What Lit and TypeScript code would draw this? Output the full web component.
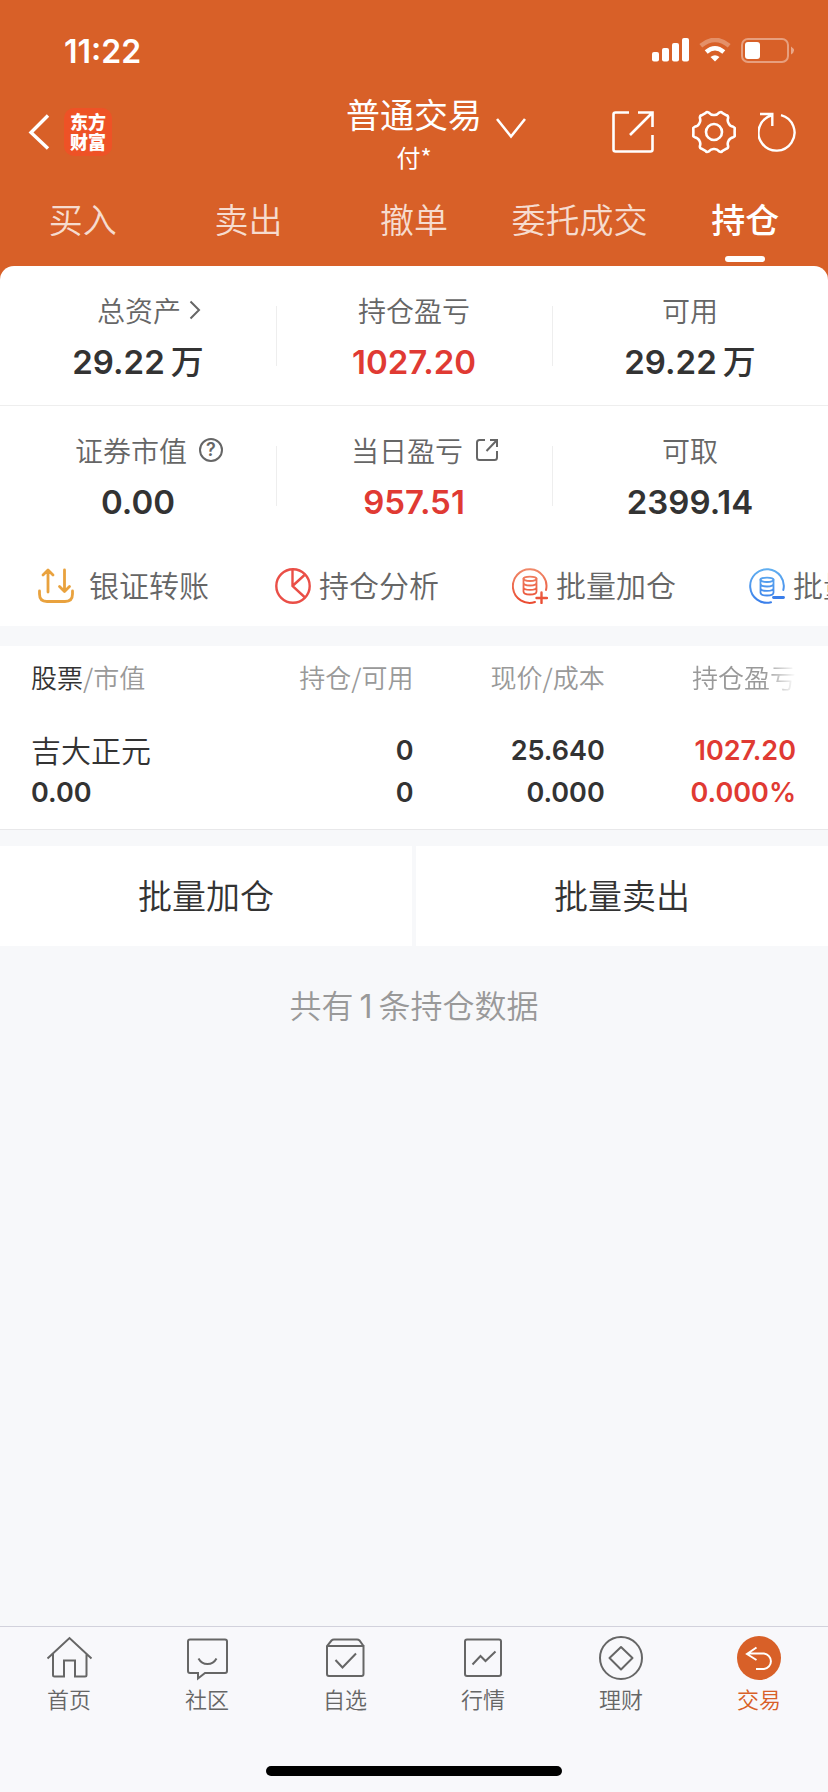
import { LitElement, html, css, svg } from "lit";
import { customElement, property } from "lit/decorators.js";
import { classMap } from "lit/directives/class-map.js";

const polar = (angle: number, r: number) => {
  const a = (angle * Math.PI) / 180;
  return `${(22 + r * Math.cos(a)).toFixed(2)} ${(22 + r * Math.sin(a)).toFixed(2)}`;
};

// Six-lobed cog: a shallow notch every 60 degrees, rounded shoulders between.
const cogPath = () => {
  let d = "";
  for (let k = 0; k < 6; k++) {
    const a = 30 + k * 60;
    d += `${k ? "L" : "M"}${polar(a - 23, 20.8)}`;
    d += `Q${polar(a - 20, 22)} ${polar(a - 15, 20)}`;
    d += `Q${polar(a - 10, 17)} ${polar(a, 17)}`;
    d += `Q${polar(a + 10, 17)} ${polar(a + 15, 20)}`;
    d += `Q${polar(a + 20, 22)} ${polar(a + 23, 20.8)}`;
  }
  return d + "Z";
};

const icons: Record<string, unknown> = {
  transfer: html`<svg width="36" height="36" viewBox="0 0 36 36" fill="none" stroke="#e9a23e" stroke-width="2.8" stroke-linecap="round" stroke-linejoin="round" aria-hidden="true">
    <path d="M1.5 23v3q0 7.5 7.5 7.5h18q7.5 0 7.5-7.5v-3M10 24V2.5M5 7l5-5 5 5M26.5 2v21.500M21.5 18.500l5 5 5-5"/></svg>`,
  pie: html`<svg width="36" height="36" viewBox="0 0 36 36" fill="none" stroke="#ea4f47" stroke-width="2.4" aria-hidden="true">
    <circle cx="18" cy="18" r="16.7"/><path d="M17.5 1.5V18L30 29.5M17.5 18L29.5 7"/></svg>`,
  add: html`<svg width="36" height="36" viewBox="0 0 36 36" fill="none" stroke="url(#warm)" stroke-width="2" stroke-linecap="round" aria-hidden="true">
    <defs><linearGradient id="warm" gradientUnits="userSpaceOnUse" x1="0" y1="0" x2="0" y2="36"><stop stop-color="#f08a6a"/><stop offset="1" stop-color="#ea4a30"/></linearGradient></defs>
    <path d="M34 22A16.8 16.8 0 1 0 23 34"/>
    <path stroke-width="1.8" d="M11.5 10.5v13c0 4 13 4 13 0v-13M11.5 14.8c0 3.6 13 3.6 13 0M11.5 19.2c0 3.6 13 3.6 13 0"/><ellipse stroke-width="1.8" cx="18" cy="10.8" rx="6.5" ry="2.2"/>
    <path stroke-width="2.4" d="M29.5 24.5V35M24.5 30H35"/></svg>`,
  minus: html`<svg width="36" height="36" viewBox="0 0 36 36" fill="none" stroke="url(#cool)" stroke-width="2" stroke-linecap="round" aria-hidden="true">
    <defs><linearGradient id="cool" gradientUnits="userSpaceOnUse" x1="0" y1="0" x2="0" y2="36"><stop stop-color="#62b0f0"/><stop offset="1" stop-color="#3a7eea"/></linearGradient></defs>
    <path d="M34.3 22A16.8 16.8 0 1 0 22 34.3"/>
    <path stroke-width="1.8" d="M11.5 11.5v13c0 4 13 4 13 0v-13M11.5 15.8c0 3.6 13 3.6 13 0M11.5 20.2c0 3.6 13 3.6 13 0"/><ellipse stroke-width="1.8" cx="18" cy="11.8" rx="6.5" ry="2.2"/>
    <path stroke-width="2.8" stroke="#3a7eea" d="M24.5 29.5H34.5"/></svg>`,
};

const tabShapes: Record<string, unknown> = {
  home: svg`<path d="M0.5 22.5L22.5 2l22 20.5M6 18v21q0 1.5 1.5 1.5H17V24.500h11v16h10q1.5 0 1.5-1.5V18"/>`,
  chat: svg`<path d="M5 3.5h35q2 0 2 2v29.500q0 2-2 2H20l-7 5.500V37H5q-2 0-2-2V5.500q0-2 2-2zM13.500 22.500q3 5.500 9 5.500t9-5.500"/>`,
  pick: svg`<path d="M4 10h36.500v28q0 2-2 2H6q-2 0-2-2V10L8.500 4.500q1-1 2.500-1h23q1.500 0 2.500 1L40.500 10M12.500 24l7 7.500L33 17.500"/>`,
  market: svg`<rect x="4" y="3.5" width="36" height="36.500" rx="2"/><path d="M11.500 28.500l8-8.500 5 5L34.500 15.500"/>`,
  wealth: svg`<circle cx="22" cy="22" r="21"/><path d="M22 11L33.500 22 22 33.500 10.500 22z" stroke-linejoin="round"/>`,
  trade: svg`<circle cx="22" cy="22" r="22" fill="#d86028" stroke="none"/><path stroke="#fff" d="M19.500 11.500L10 18l9.500 6M10.500 17.500H27a7.800 7.800 0 0 1 0 15.500H19"/>`,
};

const base = css`
  * { box-sizing: border-box; }
  svg { display: block; flex: none; }
  button {
    font: inherit; color: inherit; background: none; border: 0;
    padding: 0; margin: 0; cursor: pointer;
  }
  a { color: inherit; text-decoration: none; }
`;

@customElement("app-header")
export class AppHeader extends LitElement {
  static styles = [base, css`
    :host { display: block; background: #d86028; color: #fff; padding-bottom: 14px; margin-bottom: -14px; }
    .status { display: flex; align-items: center; justify-content: space-between; padding: 30px 34px 0 64px; height: 74px; }
    .time { font: 600 32px/44px "Inter", sans-serif; }
    .signals { display: flex; align-items: center; gap: 10px; padding-bottom: 4px; }
    .nav { display: grid; grid-template-columns: 1fr auto 1fr; align-items: center; height: 100px; margin-top: 8px; padding: 0 28px; }
    .left { display: flex; align-items: center; gap: 14px; }
    .logo {
      width: 48px; height: 48px; padding: 3px 6px; border-radius: 10px; background: #ee5226;
      font-weight: 900; font-size: 18px; line-height: 20px;
    }
    .account { display: grid; grid-template-columns: 30px auto 30px; gap: 14px; align-items: center; }
    .names { grid-column: 2; padding-top: 4px; }
    .title { display: block; font-size: 34px; line-height: 46px; }
    .owner { display: block; font-size: 24px; line-height: 40px; }
    .right { display: flex; align-items: center; justify-content: flex-end; padding-right: 4px; }
    .share { margin-right: 38px; }
    .cog { margin-right: 22px; }
    .tabs { display: grid; grid-template-columns: repeat(5, 1fr); height: 84px; }
    .tab {
      display: flex; flex-direction: column; align-items: center; gap: 2px; padding-top: 2px;
      font-size: 34px; line-height: 70px; color: rgba(255, 255, 255, 0.78); font-weight: 350; white-space: nowrap;
    }
    .tab.on { color: #fff; font-weight: 500; }
    .tab.on::after { content: ""; width: 40px; height: 6px; border-radius: 3px; background: #fff; }
  `];

  render() {
    return html`
      <div class="status">
        <span class="time">11:22</span>
        <div class="signals">
          <svg width="37" height="24" viewBox="0 0 37 24" fill="#fff" aria-hidden="true">
            <rect y="14" width="7" height="9.500" rx="2"/><rect x="10" y="10" width="7" height="13.500" rx="2"/>
            <rect x="20" y="5" width="7" height="18.500" rx="2"/><rect x="30" y="0" width="7" height="23.500" rx="2"/></svg>
          <svg width="32" height="24" viewBox="0 0 32 24" fill="none" stroke="#fff" aria-hidden="true">
            <path stroke-opacity=".3" stroke-width="4.500" d="M1.800 7.800Q16-4 30.200 7.800"/>
            <path stroke-width="4.500" d="M7.200 14Q16 6.500 24.800 14"/>
            <path fill="#fff" stroke="none" d="M16 23.500l-4.500-4.500q4.500-3.500 9 0z"/></svg>
          <svg width="53" height="25" viewBox="0 0 53 25" aria-hidden="true">
            <rect x="1" y="1" width="46" height="23" rx="6" fill="none" stroke="#fff" stroke-opacity=".4" stroke-width="2"/>
            <rect x="4" y="4" width="15" height="17" rx="3" fill="#fff"/>
            <path d="M50 8.500q6 4 0 8z" fill="#fff" fill-opacity=".45"/></svg>
        </div>
      </div>
      <div class="nav">
        <div class="left">
          <button aria-label="返回"><svg width="22" height="36" viewBox="0 0 22 36" fill="none" stroke="#fff" stroke-width="3.400"><path d="M20 1.500L3 18.500l17 16"/></svg></button>
          <div class="logo">东方财富</div>
        </div>
        <button class="account">
          <span class="names"><span class="title">普通交易</span><span class="owner">付*</span></span>
          <svg width="30" height="30" viewBox="0 0 30 30" fill="none" stroke="#fff" stroke-width="2.600" aria-hidden="true"><path d="M1 2L15 19.500 29 2"/></svg>
        </button>
        <div class="right">
          <button class="share" aria-label="分享"><svg width="42" height="42" viewBox="0 0 42 42" fill="none" stroke="#fff" stroke-width="2.600"><path d="M17 1.500H3.500q-2 0-2 2v35q0 2 2 2h35q2 0 2-2V24M26 1.500H40.500V16M40 2L18 24"/></svg></button>
          <button class="cog" aria-label="设置"><svg width="44" height="44" viewBox="0 0 44 44" fill="none" stroke="#fff" stroke-width="2.600" stroke-linejoin="round"><path d=${cogPath()}/><circle cx="22" cy="22" r="8"/></svg></button>
          <button aria-label="刷新"><svg width="38" height="40" viewBox="0 0 38 40" fill="none" stroke="#fff" stroke-width="2.400"><path d="M23 3.200A18 18 0 1 1 13 3.500M2 2H14.300V14"/></svg></button>
        </div>
      </div>
      <nav class="tabs">
        ${["买入", "卖出", "撤单", "委托成交", "持仓"].map(
          (t) => html`<a href="#" class=${classMap({ tab: true, on: t === "持仓" })}>${t}</a>`
        )}
      </nav>`;
  }
}

@customElement("stat-cell")
export class StatCell extends LitElement {
  @property() label = "";
  @property() value = "";
  @property() unit = "";
  @property() mark = "";
  @property({ type: Boolean }) gain = false;

  static styles = [base, css`
    :host { display: block; padding-top: 24px; text-align: center; color: #333; }
    .label { display: flex; justify-content: center; align-items: center; font-size: 28px; line-height: 40px; color: #666; font-weight: 350; }
    .marked { padding-left: 22px; gap: 12px; }
    .arrow { gap: 8px; }
    .value { margin-top: 12px; font: 600 33px/40px "Inter", "Noto Sans CJK SC", sans-serif; }
    .unit { margin-left: 6px; font-weight: 500; }
    .gain { color: #e03a33; }
    .help { width: 24px; height: 24px; border: 2px solid #666; border-radius: 50%; font: 600 18px/20px "Inter", sans-serif; }
  `];

  private icon() {
    if (this.mark === "arrow")
      return html`<svg width="12" height="20" viewBox="0 0 12 20" fill="none" stroke="#666" stroke-width="2" aria-hidden="true"><path d="M1.500 1.500L10 10l-8.500 8.500"/></svg>`;
    if (this.mark === "help") return html`<button class="help" aria-label="说明">?</button>`;
    if (this.mark === "open")
      return html`<svg width="24" height="24" viewBox="0 0 24 24" fill="none" stroke="#666" stroke-width="2" aria-hidden="true"><path d="M10 2H4.500Q2 2 2 4.500v15Q2 22 4.500 22h15q2.500 0 2.500-2.500V13M15 2h7v7M22 2L11.500 13"/></svg>`;
    return "";
  }

  render() {
    return html`
      <div class=${classMap({ label: true, marked: !!this.mark, arrow: this.mark === "arrow" })}><span>${this.label}</span>${this.icon()}</div>
      <div class=${classMap({ value: true, gain: this.gain })}>${this.value}${this.unit ? html`<span class="unit">${this.unit}</span>` : ""}</div>`;
  }
}

@customElement("tab-bar")
export class TabBar extends LitElement {
  static styles = [base, css`
    :host { display: block; border-top: 1px solid #d2d2dc; background: #f8f8fb; color: #666; padding-bottom: 16px; }
    .items { display: grid; grid-template-columns: repeat(6, 1fr); }
    .item { display: flex; flex-direction: column; align-items: center; gap: 2px; padding-top: 9px; font-size: 22px; line-height: 32px; font-weight: 350; }
    .on { color: #d86028; }
    .indicator { width: 296px; height: 10px; border-radius: 5px; background: #000; margin: 52px auto 0; }
    svg { overflow: visible; }
  `];

  render() {
    const items = [["home", "首页"], ["chat", "社区"], ["pick", "自选"], ["market", "行情"], ["wealth", "理财"], ["trade", "交易"]];
    return html`
      <nav class="items">
        ${items.map(([id, text]) => html`
          <a href="#" class=${classMap({ item: true, on: id === "trade" })}>
            <svg width="44" height="44" viewBox="0 0 44 44" fill="none" stroke="#666" stroke-width="2" aria-hidden="true">${tabShapes[id]}</svg>
            <span>${text}</span>
          </a>`)}
      </nav>
      <div class="indicator"></div>`;
  }
}

@customElement("app-root")
export class AppRoot extends LitElement {
  static styles = [base, css`
    :host {
      display: flex; flex-direction: column; min-height: 100vh; background: #f7f8fa; color: #333;
      font-family: "Noto Sans CJK SC", sans-serif;
    }
    main { flex: 1; min-width: 0; }
    .summary { background: #fff; border-radius: 14px 14px 0 0; }
    .stats { display: grid; grid-template-columns: repeat(3, 1fr); height: 140px; }
    .stats.first { border-bottom: 1px solid #eee; }
    .cell + .cell { background: linear-gradient(#eee, #eee) 0 40px / 1px 60px no-repeat; }
    .actions { display: flex; height: 80px; padding-left: 38px; overflow-x: auto; scrollbar-width: none; }
    .action { flex: 0 0 237px; display: flex; align-items: center; gap: 8px; font-size: 30px; color: #666; font-weight: 350; white-space: nowrap; }
    .action.wide { gap: 15px; }
    .action span { padding-bottom: 4px; }
    .holdings { margin-top: 20px; padding: 0 32px 0 31px; background: #fff; border-bottom: 1px solid #e8e8ea; }
    table { width: 100%; table-layout: fixed; border-collapse: collapse; }
    th, td { padding: 0; text-align: right; white-space: nowrap; }
    th:first-child, td:first-child { text-align: left; }
    th { height: 64px; padding-bottom: 2px; font-size: 26px; line-height: 40px; color: #999; font-weight: 350; }
    .strong { color: #333; }
    .fade { -webkit-mask-image: linear-gradient(to left, transparent, #000 32px); mask-image: linear-gradient(to left, transparent, #000 32px); }
    td { padding: 20px 0 15px; font: 600 27px/42px "Inter", sans-serif; }
    td div { height: 42px; }
    .name { font: 350 30px/38px "Noto Sans CJK SC", sans-serif; }
    .gain { color: #e03a33; }
    .bulk { display: grid; grid-template-columns: 1fr 1fr; gap: 4px; margin-top: 16px; }
    .bulk button { height: 100px; padding-bottom: 4px; background: #fff; font-size: 34px; font-weight: 350; }
    .count { margin: 34px 0; text-align: center; font-size: 32px; line-height: 48px; color: #999; font-weight: 350; }
    .num { font-family: "Inter", sans-serif; font-weight: 400; margin: 0 6px; }
  `];

  render() {
    return html`
      <app-header></app-header>
      <main>
        <section class="summary">
          <div class="stats first">
            <stat-cell class="cell" label="总资产" value="29.22" unit="万" mark="arrow"></stat-cell>
            <stat-cell class="cell" label="持仓盈亏" value="1027.20" gain></stat-cell>
            <stat-cell class="cell" label="可用" value="29.22" unit="万"></stat-cell>
          </div>
          <div class="stats">
            <stat-cell class="cell" label="证券市值" value="0.00" mark="help"></stat-cell>
            <stat-cell class="cell" label="当日盈亏" value="957.51" mark="open" gain></stat-cell>
            <stat-cell class="cell" label="可取" value="2399.14"></stat-cell>
          </div>
          <div class="actions">
            <button class="action wide">${icons.transfer}<span>银证转账</span></button>
            <button class="action">${icons.pie}<span>持仓分析</span></button>
            <button class="action">${icons.add}<span>批量加仓</span></button>
            <button class="action">${icons.minus}<span>批量卖出</span></button>
          </div>
        </section>
        <section class="holdings">
          <table>
            <thead>
              <tr>
                <th><span class="strong">股票</span>/市值</th>
                <th>持仓/可用</th>
                <th>现价/成本</th>
                <th><span class="fade">持仓盈亏</span></th>
              </tr>
            </thead>
            <tbody>
              <tr>
                <td><div class="name">吉大正元</div><div>0.00</div></td>
                <td><div>0</div><div>0</div></td>
                <td><div>25.640</div><div>0.000</div></td>
                <td class="gain"><div>1027.20</div><div>0.000%</div></td>
              </tr>
            </tbody>
          </table>
        </section>
        <div class="bulk"><button>批量加仓</button><button>批量卖出</button></div>
        <p class="count">共有<span class="num">1</span>条持仓数据</p>
      </main>
      <tab-bar></tab-bar>`;
  }
}
